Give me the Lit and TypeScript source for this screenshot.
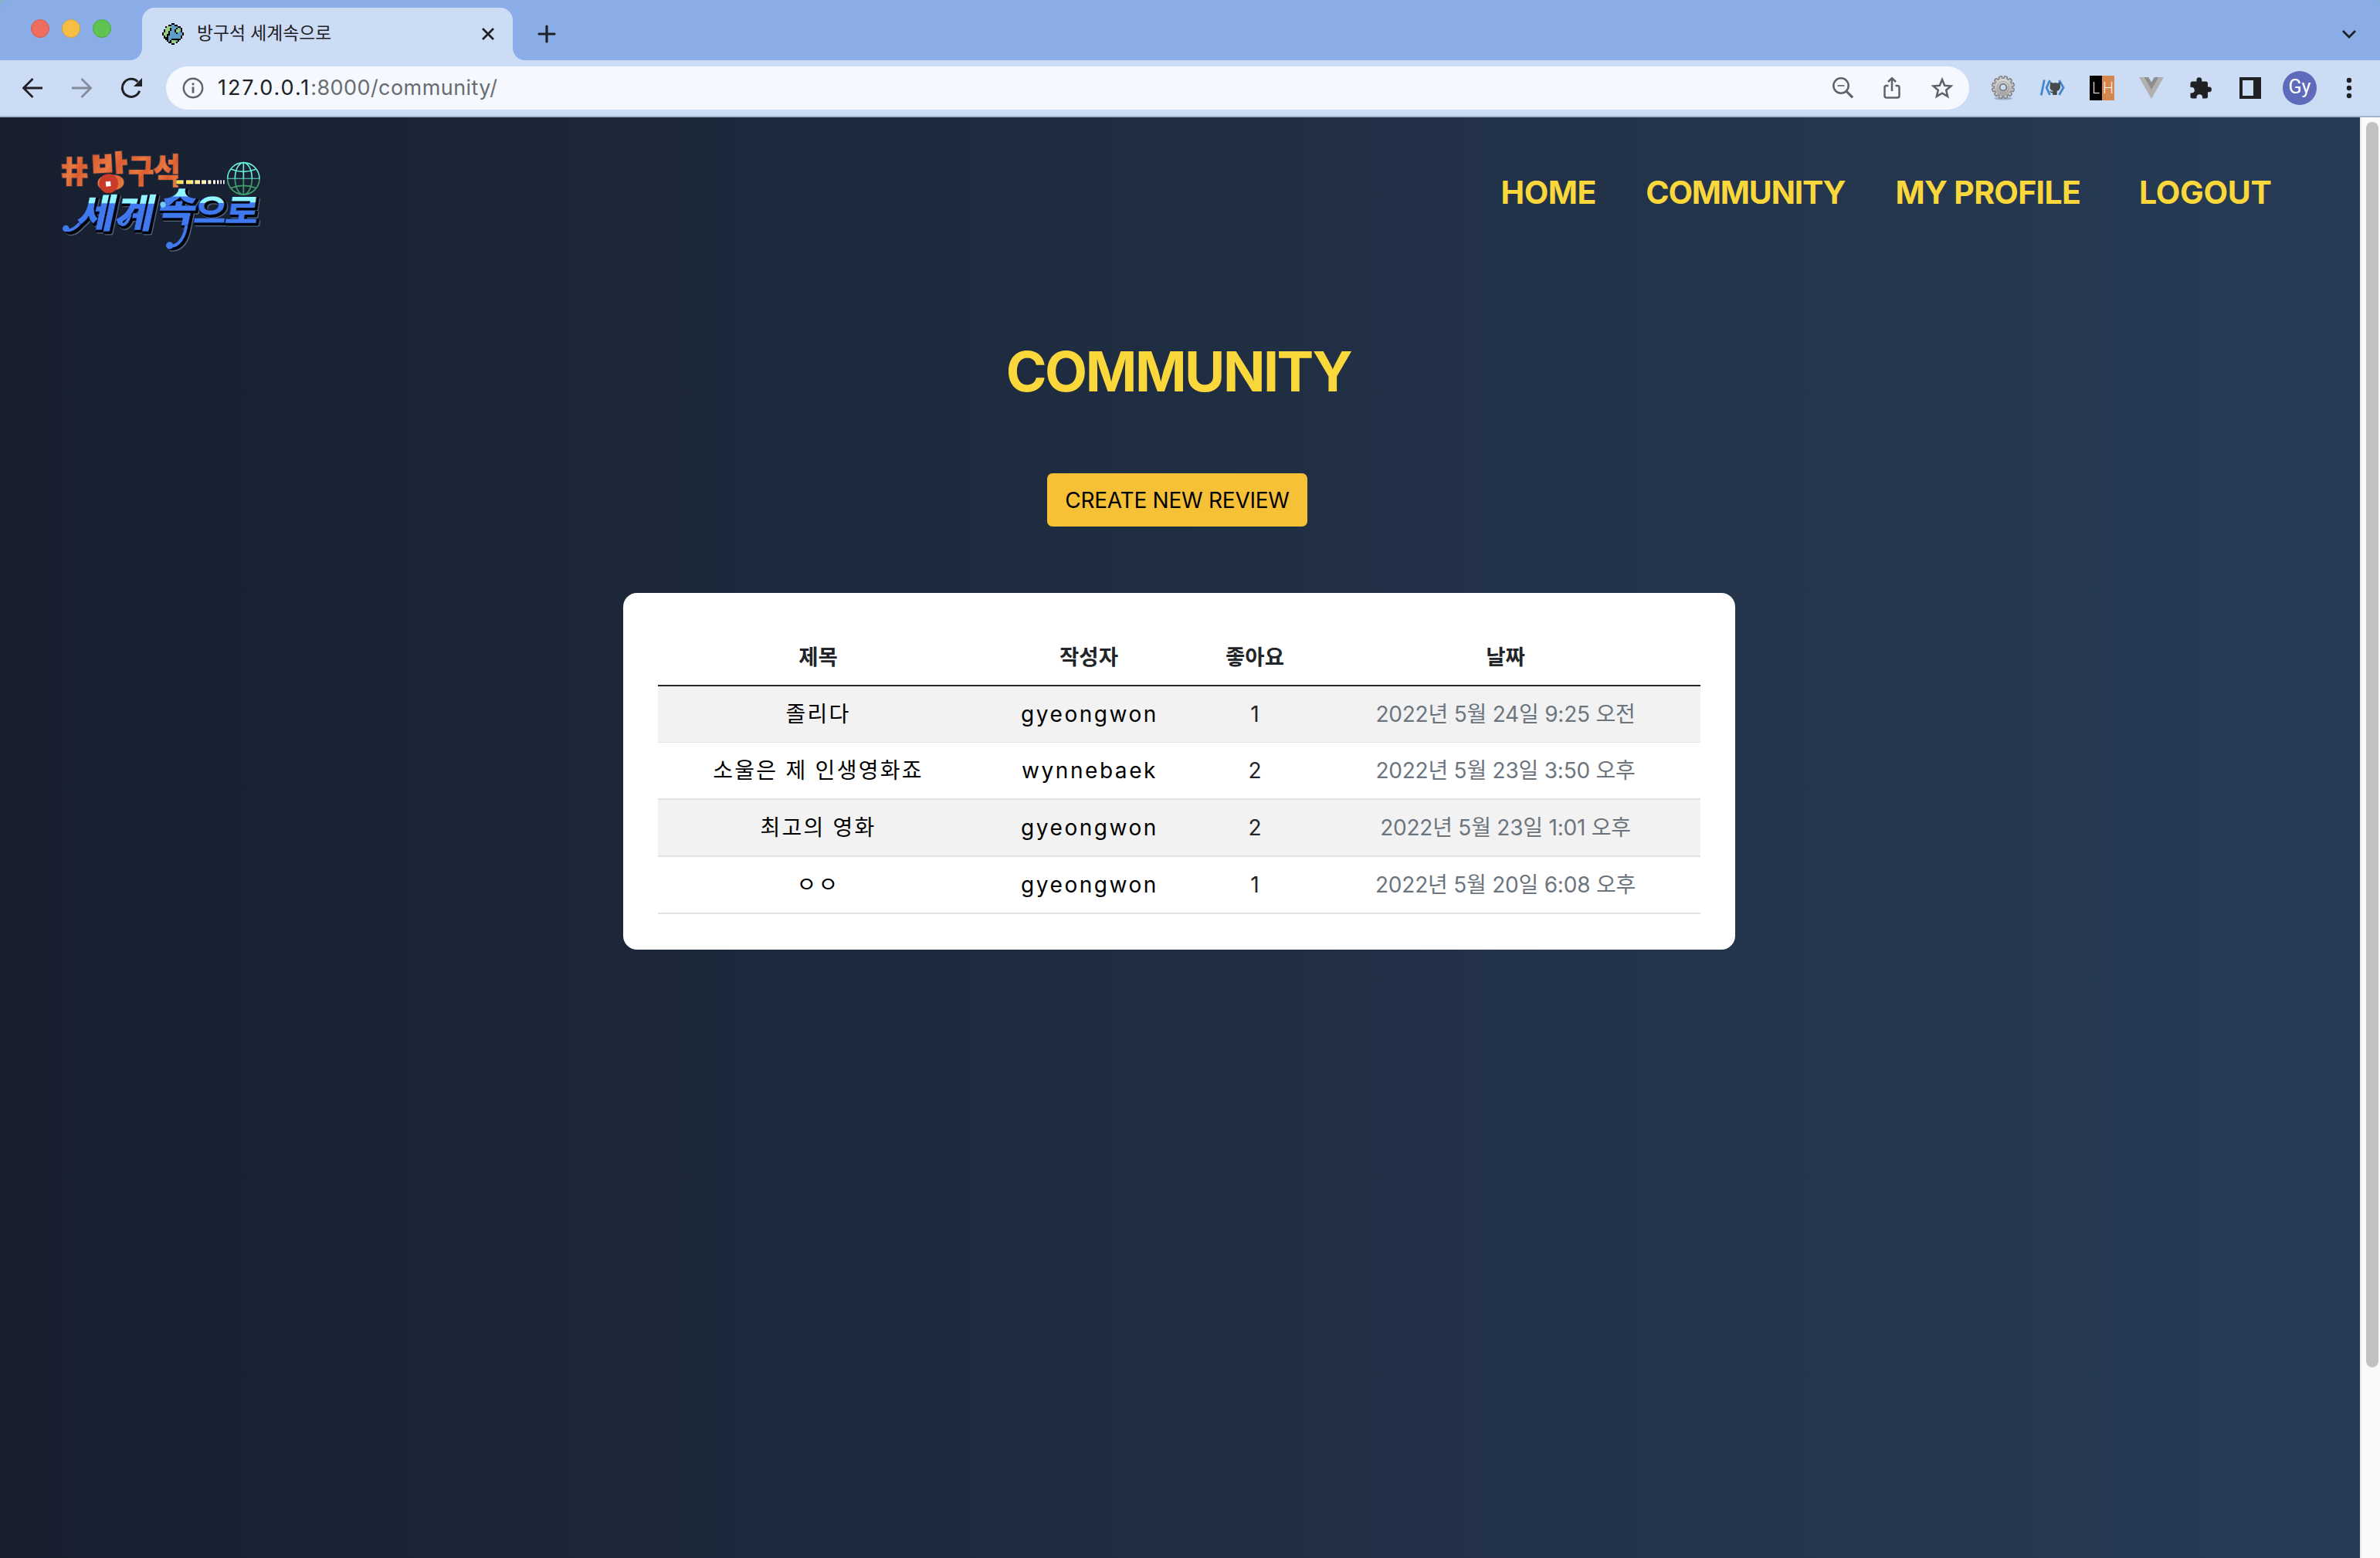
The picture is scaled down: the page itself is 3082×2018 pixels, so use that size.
import { LitElement, html, css, svg } from "lit";
import { customElement } from "lit/decorators.js";
import { styleMap } from "lit/directives/style-map.js";

/* ---------- data ---------- */

const REVIEWS = [
  { title: "졸리다", author: "gyeongwon", likes: 1, date: "2022년 5월 24일 9:25 오전" },
  { title: "소울은 제 인생영화죠", author: "wynnebaek", likes: 2, date: "2022년 5월 23일 3:50 오후" },
  { title: "최고의 영화", author: "gyeongwon", likes: 2, date: "2022년 5월 23일 1:01 오후" },
  { title: "ㅇㅇ", author: "gyeongwon", likes: 1, date: "2022년 5월 20일 6:08 오후" },
];

const LINKS = [
  { label: "HOME", tracking: -0.45 },
  { label: "COMMUNITY", tracking: -1.2 },
  { label: "MY PROFILE", tracking: -0.7 },
  { label: "LOGOUT", tracking: -0.3 },
];

const GLOBE_PIXELS = [
  "......bb......",
  "....bbuubb....",
  "..bggguuuubb..",
  "..gggbuuubgub.",
  ".bgggbuubgggb.",
  ".bggbuuubggub.",
  "bgggbuuuubuuub",
  "bggbbuuuuuuuub",
  ".bgbuuuuuuuub.",
  ".bbbuuuuuuuub.",
  "..bbuubbbbbb..",
  "...bubgggub...",
  "....bbgggb....",
  "......bb......",
];
const PIXEL_COLORS: Record<string, string> = { b: "#000", g: "#95cf84", u: "#5b9fc9" };

/* ---------- icons ---------- */

const favicon = html`<svg class="favicon" width="28" height="28" viewBox="0 0 14 14" shape-rendering="crispEdges">
  ${GLOBE_PIXELS.map((row, y) =>
    [...row].map((c, x) => (c === "." ? null : svg`<rect x=${x} y=${y} width="1" height="1" fill=${PIXEL_COLORS[c]}></rect>`))
  )}
</svg>`;

const backIcon = html`<svg width="28" height="28" viewBox="0 0 28 28" fill="none" stroke="#202124" stroke-width="2.8">
  <path d="M27 14H3M14.5 2 2.5 14l12 12"></path>
</svg>`;

const forwardIcon = html`<svg width="28" height="28" viewBox="0 0 28 28" fill="none" stroke="#848c9c" stroke-width="2.8">
  <path d="M1 14H25M13.500 2l12 12-12 12"></path>
</svg>`;

const reloadIcon = html`<svg width="28" height="28" viewBox="0 0 28 28">
  <path d="M24.700 17.800A11.500 11.500 0 1 1 22.300 6" fill="none" stroke="#202124" stroke-width="3"></path>
  <path d="M28 1v11h-11z" fill="#202124"></path>
</svg>`;

const infoIcon = html`<svg width="28" height="28" viewBox="0 0 28 28">
  <circle cx="14" cy="14" r="12.200" fill="none" stroke="#5f6368" stroke-width="2.400"></circle>
  <path d="M14 7.500v2.800M14 12.500v8" stroke="#5f6368" stroke-width="2.800"></path>
</svg>`;

const zoomIcon = html`<svg width="28" height="30" viewBox="0 0 28 30" fill="none" stroke="#5f6368">
  <circle cx="12" cy="12" r="9.700" stroke-width="2.500"></circle>
  <path d="M7.500 12h9" stroke-width="1.600"></path>
  <path d="M18.800 19 27 27.300" stroke-width="3.200"></path>
</svg>`;

const shareIcon = html`<svg width="24" height="30" viewBox="0 0 24 30" fill="none" stroke="#5f6368" stroke-width="2.500">
  <path d="M7.500 12H5a2.500 2.500 0 0 0-2.500 2.500v10.500a2.500 2.500 0 0 0 2.500 2.500h14a2.500 2.500 0 0 0 2.500-2.500v-10.500a2.500 2.500 0 0 0-2.500-2.500h-2.500"></path>
  <path d="M12 19V3M7 7l5-4.800L17 7"></path>
</svg>`;

const starIcon = html`<svg width="30" height="30" viewBox="0 0 30 30" fill="none" stroke="#5f6368" stroke-width="2.500">
  <path d="M15 4l3.200 7.700 8.300.7-6.300 5.400 1.900 8.100L15 21.600l-7.100 4.300 1.900-8.100-6.300-5.400 8.300-.7z"></path>
</svg>`;

const gearIcon = html`<svg width="32" height="34" viewBox="0 0 32 34">
  <defs>
    <linearGradient id="metal" gradientUnits="userSpaceOnUse" x1="0" y1="2" x2="0" y2="30">
      <stop offset="0" stop-color="#e2e2e2"></stop>
      <stop offset="1" stop-color="#9c9c9c"></stop>
    </linearGradient>
  </defs>
  <ellipse cx="16" cy="30.500" rx="12" ry="2" fill="#8d9bb5" opacity=".7"></ellipse>
  ${Array.from({ length: 12 }, (_, i) => svg`<rect x="13.800" y="1.500" width="4.400" height="8" rx="1.200" fill="#c4c4c4" stroke="#747474" stroke-width="1.200" transform="rotate(${i * 30 + 15} 16 16)"></rect>`)}
  <circle cx="16" cy="16" r="11" fill="url(#metal)"></circle>
  <circle cx="16" cy="16" r="7.500" fill="none" stroke="#a2a2a2" stroke-width="1"></circle>
  <circle cx="16" cy="16" r="4.300" fill="#cddcf5" stroke="#6f6f6f" stroke-width="1.600"></circle>
</svg>`;

const codeCatIcon = html`<svg width="32" height="24" viewBox="0 0 32 24">
  <path d="M1.300 21.500 5.300 1.500M12.500 2 8.200 11.500l4.300 9.500M24.500 2l5.500 9.500-5.500 9.500" fill="none" stroke="#4286cf" stroke-width="2.800"></path>
  <path d="M13.500 4l3 1.700c2-.5 4-.5 6 0l3-1.700c.7 2 .5 3.500.2 4.300 1.200 3.700-.7 7-4 7.700v5h-5.500v-2.500c-2.500.2-3.200-1.500-4-2.700 2 .3 2.300 1.200 4 1l.3-1c-3.300-.7-4.800-4-3.500-7.500-.3-1.300-.2-3 .5-4.300z" fill="#46494d"></path>
</svg>`;

const vIcon = html`<svg width="32" height="28" viewBox="0 0 32 28">
  <path d="M0 0h6.500L16 16.500 25.500 0H32L16 28z" fill="#b0b0b0"></path>
  <path d="M6.500 0h5.700L16 6.600 19.800 0h5.700L16 16.500z" fill="#8e8e8e"></path>
</svg>`;

const puzzleIcon = html`<svg width="30" height="30" viewBox="0 0 30 30">
  <path d="M9.400 6.500V4.600a3.400 3.400 0 0 1 6.800 0V6.500h5.300A2.500 2.500 0 0 1 24 9v4.600h1.600a3.300 3.300 0 0 1 0 6.600H24v5.800a2.500 2.500 0 0 1-2.500 2.500h-4.400v-1.400a3.800 3.800 0 0 0-7.600 0v1.400H4A2.500 2.500 0 0 1 1.500 26v-4.400H3a3.800 3.800 0 0 0 0-7.600H1.500V9A2.500 2.500 0 0 1 4 6.500z" fill="#202124"></path>
</svg>`;

const panelIcon = html`<svg width="28" height="28" viewBox="0 0 28 28">
  <path d="M0 0h28v28H0zM4 4v20h14V4z" fill="#202124" fill-rule="evenodd"></path>
</svg>`;

const dotsIcon = html`<svg width="8" height="28" viewBox="0 0 8 28" fill="#202124">
  <circle cx="4" cy="4" r="3.200"></circle>
  <circle cx="4" cy="14" r="3.200"></circle>
  <circle cx="4" cy="24" r="3.200"></circle>
</svg>`;

/* ---------- site logo ---------- */

interface Glyph { ch: string; x: number; y: number; size: number; sx: number; skew: number; rot?: number }

const WARM: Glyph[] = [
  { ch: "#", x: 60, y: 213, size: 152, sx: 1.25, skew: 8 },
  { ch: "방", x: 178, y: 218, size: 160, sx: 0.98, skew: 0, rot: -3 },
  { ch: "구", x: 317, y: 202, size: 128, sx: 0.86, skew: 0 },
  { ch: "석", x: 414, y: 205, size: 136, sx: 0.86, skew: 0 },
];

const COOL: Glyph[] = [
  { ch: "세", x: 112, y: 376, size: 154, sx: 1.05, skew: -12 },
  { ch: "계", x: 260, y: 376, size: 154, sx: 1.07, skew: -12 },
  { ch: "속", x: 425, y: 350, size: 156, sx: 1.05, skew: -12 },
  { ch: "으", x: 568, y: 358, size: 130, sx: 1.07, skew: -8 },
  { ch: "로", x: 690, y: 358, size: 130, sx: 1.08, skew: -8 },
];

const TAILS = [
  "M150 330C125 370 95 395 74 380",
  "M325 325C315 358 300 370 286 358",
  "M545 355C540 410 515 450 478 446",
  "M490 270C475 285 462 292 452 286",
];

const place = (g: Glyph) => `translate(${g.x} ${g.y}) rotate(${g.rot ?? 0}) skewX(${g.skew}) scale(${g.sx} 1)`;
const letters = (list: Glyph[], cls: string) =>
  list.map((g) => svg`<text class=${cls} font-size=${g.size} transform=${place(g)}>${g.ch}</text>`);
const tails = (cls: string) => TAILS.map((d) => svg`<path class=${cls} d=${d}></path>`);

const DASHES = [[505, 28], [543, 28], [577, 20], [603, 18], [628, 12], [648, 9], [663, 7], [676, 5], [687, 5]];

@customElement("site-logo")
export class SiteLogo extends LitElement {
  static styles = css`
    :host { display: block; width: 300px; height: 170px; }
    svg { display: block; }
    text { font-family: "Noto Sans CJK KR", sans-serif; font-weight: 900; }
    .warm-edge { fill: #4a3237; stroke: #4a3a42; stroke-width: 5; }
    .warm { fill: url(#warm); }
    .halo { fill: #53647c; stroke: #53647c; stroke-width: 10; stroke-linejoin: round; }
    .shade { fill: #02040c; stroke: #02040c; stroke-width: 9; stroke-linejoin: round; }
    .cool { fill: url(#cool); stroke: #0b1c56; stroke-width: 1; }
    .tail { fill: none; stroke: #4079ee; stroke-width: 12; stroke-linecap: round; }
    .tail-shade { fill: none; stroke: #02040c; stroke-width: 22; stroke-linecap: round; }
    .tail-halo { fill: none; stroke: #53647c; stroke-width: 24; stroke-linecap: round; }
  `;

  render() {
    return html`<svg width="300" height="170" viewBox="0 0 900 510">
      <defs>
        <linearGradient id="warm" x1="0" y1="0" x2="1" y2="1">
          <stop offset="0" stop-color="#cf4a2a"></stop>
          <stop offset=".45" stop-color="#ea7840"></stop>
          <stop offset=".6" stop-color="#dc5c30"></stop>
          <stop offset="1" stop-color="#f09a4c"></stop>
        </linearGradient>
        <linearGradient id="cool" x1="0" y1="0" x2="0" y2="1">
          <stop offset=".37" stop-color="#93f6ff"></stop>
          <stop offset=".38" stop-color="#4079ee"></stop>
        </linearGradient>
        <linearGradient id="globe" gradientUnits="userSpaceOnUse" x1="0" y1="120" x2="0" y2="248">
          <stop offset=".5" stop-color="#66ead6"></stop>
          <stop offset=".52" stop-color="#3f9f6c"></stop>
        </linearGradient>
        <linearGradient id="track" gradientUnits="userSpaceOnUse" x1="505" y1="0" x2="693" y2="0">
          <stop offset="0" stop-color="#ffe14e"></stop>
          <stop offset="1" stop-color="#ffffff"></stop>
        </linearGradient>
      </defs>
      ${letters(WARM, "warm-edge")} ${letters(WARM, "warm")}
      <circle cx="242" cy="203" r="37" fill="#c93a28"></circle>
      <rect x="231" y="195" width="19" height="19" fill="#fff" transform="rotate(-6 240 204)"></rect>
      <rect x="505" y="185" width="189" height="24" fill="#10193a"></rect>
      ${DASHES.map(([x, w]) => svg`<rect x=${x} y="190" width=${w} height="15" fill="url(#track)"></rect>`)}
      <g transform="translate(9 9)">${tails("tail-halo")} ${letters(COOL, "halo")}</g>
      <g transform="translate(6 6)">${tails("tail-shade")} ${letters(COOL, "shade")}</g>
      ${tails("tail")} ${letters(COOL, "cool")}
      <circle cx="76" cy="378" r="13" fill="#4079ee"></circle>
      <circle cx="287" cy="354" r="10" fill="#4079ee"></circle>
      <circle cx="479" cy="444" r="14" fill="#4079ee"></circle>
      <circle cx="453" cy="285" r="11" fill="#72cbf8"></circle>
      <g fill="none" stroke="url(#globe)" stroke-width="5">
        <circle cx="766" cy="184" r="62"></circle>
        <ellipse cx="766" cy="184" rx="33" ry="62"></ellipse>
        <path d="M763.500 122h5v124h-5zM704 182.500h124v3H704z" fill="url(#globe)" stroke="none"></path>
        <path d="M716 147q50 20 100 0M716 221q50-20 100 0"></path>
      </g>
    </svg>`;
  }
}

/* ---------- browser frame ---------- */

@customElement("browser-frame")
export class BrowserFrame extends LitElement {
  static styles = css`
    :host { display: block; color: #202124; background: #86b4cf; font-family: Inter, "Noto Sans CJK KR", sans-serif; }
    svg { display: block; flex: none; }
    .tabs { display: flex; height: 78px; background: #8aace7; border-radius: 10px 6px 0 0; }
    .lights { display: flex; gap: 16px; padding: 25px 0 0 40px; width: 144px; flex: none; }
    .light { width: 24px; height: 24px; border-radius: 50%; box-sizing: border-box; border: 1px solid; }
    .red { background: #ee6d5e; border-color: #d85a4c; }
    .amber { background: #f6be45; border-color: #dca638; }
    .green { background: #5fc351; border-color: #4daa3f; }
    .tab { position: relative; display: flex; align-items: center; box-sizing: border-box; width: 480px; height: 68px; margin-top: 10px; padding: 0 24px 0 26px; background: #cddcf5; border-radius: 16px 16px 0 0; }
    .tab::before, .tab::after { content: ""; position: absolute; bottom: 0; width: 16px; height: 16px; }
    .tab::before { left: -16px; background: radial-gradient(circle at 0 0, transparent 15.500px, #cddcf5 16.500px); }
    .tab::after { right: -16px; background: radial-gradient(circle at 100% 0, transparent 15.500px, #cddcf5 16.500px); }
    .tab-title { margin-left: 17px; flex: 1; font-size: 22.800px; line-height: 30px; padding-bottom: 2px; white-space: nowrap; }
    .plus { margin: 32px 0 0 32px; }
    .chevron { margin: 38px 30px 0 auto; }
    .toolbar { display: flex; align-items: center; height: 72px; background: #cddcf5; border-bottom: 2px solid #a5b3cd; box-sizing: content-box; }
    .nav-icons { display: flex; flex: none; gap: 36px; padding-left: 28px; width: 187px; box-sizing: content-box; }
    .omnibox { display: flex; align-items: center; box-sizing: border-box; width: 2335px; height: 56px; padding: 0 20px 0 21px; border-radius: 28px; background: #f5f8fe; flex: none; }
    .url { display: flex; flex: 1; margin-left: 18px; font-size: 27px; line-height: 40px; white-space: nowrap; }
    .host { letter-spacing: 1.950px; }
    .path { letter-spacing: .430px; color: #6a6c70; }
    .box-icons { display: flex; align-items: center; gap: 38px; }
    .extensions { display: flex; align-items: center; padding-left: 12px; }
    .slot { display: flex; align-items: center; justify-content: center; width: 64px; height: 56px; flex: none; }
    .lh { display: grid; grid-template-columns: 1fr 1fr; width: 32px; height: 32px; color: #fff; font: 300 19.500px/32px "Open Sans", sans-serif; text-align: center; }
    .l { background: #000; }
    .h { background: #d4874e; }
    .avatar { width: 44px; height: 44px; border-radius: 50%; background: #5e6bbb; color: #fff; font: 400 25px/42px Roboto, sans-serif; text-align: center; }
  `;

  render() {
    return html`
      <div class="tabs">
        <div class="lights"><div class="light red"></div><div class="light amber"></div><div class="light green"></div></div>
        <div class="tab">
          ${favicon}
          <div class="tab-title">방구석 세계속으로</div>
          <svg width="16" height="16" viewBox="0 0 16 16" stroke="#202124" stroke-width="2.800"><path d="M1 1l14 14M15 1 1 15"></path></svg>
        </div>
        <svg class="plus" width="24" height="24" viewBox="0 0 24 24" stroke="#202124" stroke-width="3.200" stroke-linecap="round"><path d="M12 2v20M2 12h20"></path></svg>
        <svg class="chevron" width="20" height="13" viewBox="0 0 20 13" fill="none" stroke="#202124" stroke-width="2.800"><path d="M2 2l8 8 8-8"></path></svg>
      </div>
      <div class="toolbar">
        <div class="nav-icons">
          ${backIcon} ${forwardIcon} ${reloadIcon}
        </div>
        <div class="omnibox">
          ${infoIcon}
          <div class="url"><span class="host">127.0.0.1</span><span class="path">:8000/community/</span></div>
          <div class="box-icons">${zoomIcon} ${shareIcon} ${starIcon}</div>
        </div>
        <div class="extensions">
          <div class="slot">${gearIcon}</div>
          <div class="slot">${codeCatIcon}</div>
          <div class="slot"><div class="lh"><span class="l">L</span><span class="h">H</span></div></div>
          <div class="slot">${vIcon}</div>
          <div class="slot">${puzzleIcon}</div>
          <div class="slot">${panelIcon}</div>
          <div class="slot"><div class="avatar">Gy</div></div>
          <div class="slot">${dotsIcon}</div>
        </div>
      </div>
    `;
  }
}

/* ---------- reviews ---------- */

@customElement("review-table")
export class ReviewTable extends LitElement {
  static styles = css`
    :host { display: block; box-sizing: border-box; width: 1440px; height: 462px; padding: 46px 45px; border-radius: 18px; background: #fff; color: #212529; }
    .row { display: grid; grid-template-columns: 415px 286px 144px 505px; height: 72px; line-height: 73px; border-bottom: 2px solid #dee2e6; font-size: 28px; text-align: center; white-space: nowrap; }
    .row:nth-child(even) { background: #f2f2f2; }
    .row.head { height: 73px; line-height: 74px; font-size: 27.500px; font-weight: 700; border-bottom-color: #212529; }
    .row.first { border-bottom-width: 1px; }
    .row:last-child { line-height: 72px; }
    .title { color: #000; letter-spacing: 2.250px; }
    .author { color: #000; letter-spacing: 2.550px; padding-left: 2px; }
    .date { color: #6c757d; letter-spacing: -.220px; }
  `;

  render() {
    return html`
      <div class="row head"><div>제목</div><div>작성자</div><div>좋아요</div><div>날짜</div></div>
      ${REVIEWS.map((r, i) => html`<div class="row ${i === 0 ? "first" : ""}">
        <div class="title">${r.title}</div>
        <div class="author">${r.author}</div>
        <div>${r.likes}</div>
        <div class="date">${r.date}</div>
      </div>`)}
    `;
  }
}

@customElement("app-root")
export class AppRoot extends LitElement {
  static styles = css`
    :host { display: flex; flex-direction: column; width: 3082px; height: 2018px; overflow: hidden; font-family: Inter, "Noto Sans CJK KR", sans-serif; }
    .viewport { display: flex; flex: 1; min-height: 0; }
    .page { display: flex; flex-direction: column; width: 3056px; background: linear-gradient(to right, #171f2f, #283c56); }
    .header { display: flex; justify-content: space-between; padding: 18px 113px 0 60px; height: 170px; }
    .links { display: grid; grid-template-columns: 187.800px 323.200px 315.500px 173px; margin-top: 54px; height: 50px; line-height: 50px; font-size: 41px; font-weight: 700; color: #fad83b; white-space: nowrap; }
    .main { display: flex; flex-direction: column; align-items: center; }
    .heading { margin: 91px 4px 0 0; font-size: 71.500px; line-height: 100px; font-weight: 700; letter-spacing: -2.450px; color: #fad83b; }
    .create { box-sizing: border-box; width: 337px; height: 69px; margin: 82px 7px 0 0; border: 0; padding: 2px 0 0; border-radius: 7px; background: #f7c137; color: #000; font: 400 28px/67px Inter, sans-serif; letter-spacing: -.240px; text-align: center; }
    .reviews { margin: 86px 2px 0 0; }
    .scrollbar { box-sizing: border-box; flex: 1; padding: 6px 2px 0 6px; background: #fafafa; border-left: 2px solid #e8e8e8; }
    .thumb { height: 1613px; border-radius: 8px; background: #c1c1c1; }
  `;

  render() {
    return html`
      <browser-frame></browser-frame>
      <div class="viewport">
        <div class="page">
          <div class="header">
            <site-logo></site-logo>
            <nav class="links">
              ${LINKS.map((l) => html`<span style=${styleMap({ letterSpacing: `${l.tracking}px` })}>${l.label}</span>`)}
            </nav>
          </div>
          <div class="main">
            <div class="heading">COMMUNITY</div>
            <button class="create">CREATE NEW REVIEW</button>
            <review-table class="reviews"></review-table>
          </div>
        </div>
        <div class="scrollbar"><div class="thumb"></div></div>
      </div>
    `;
  }
}
